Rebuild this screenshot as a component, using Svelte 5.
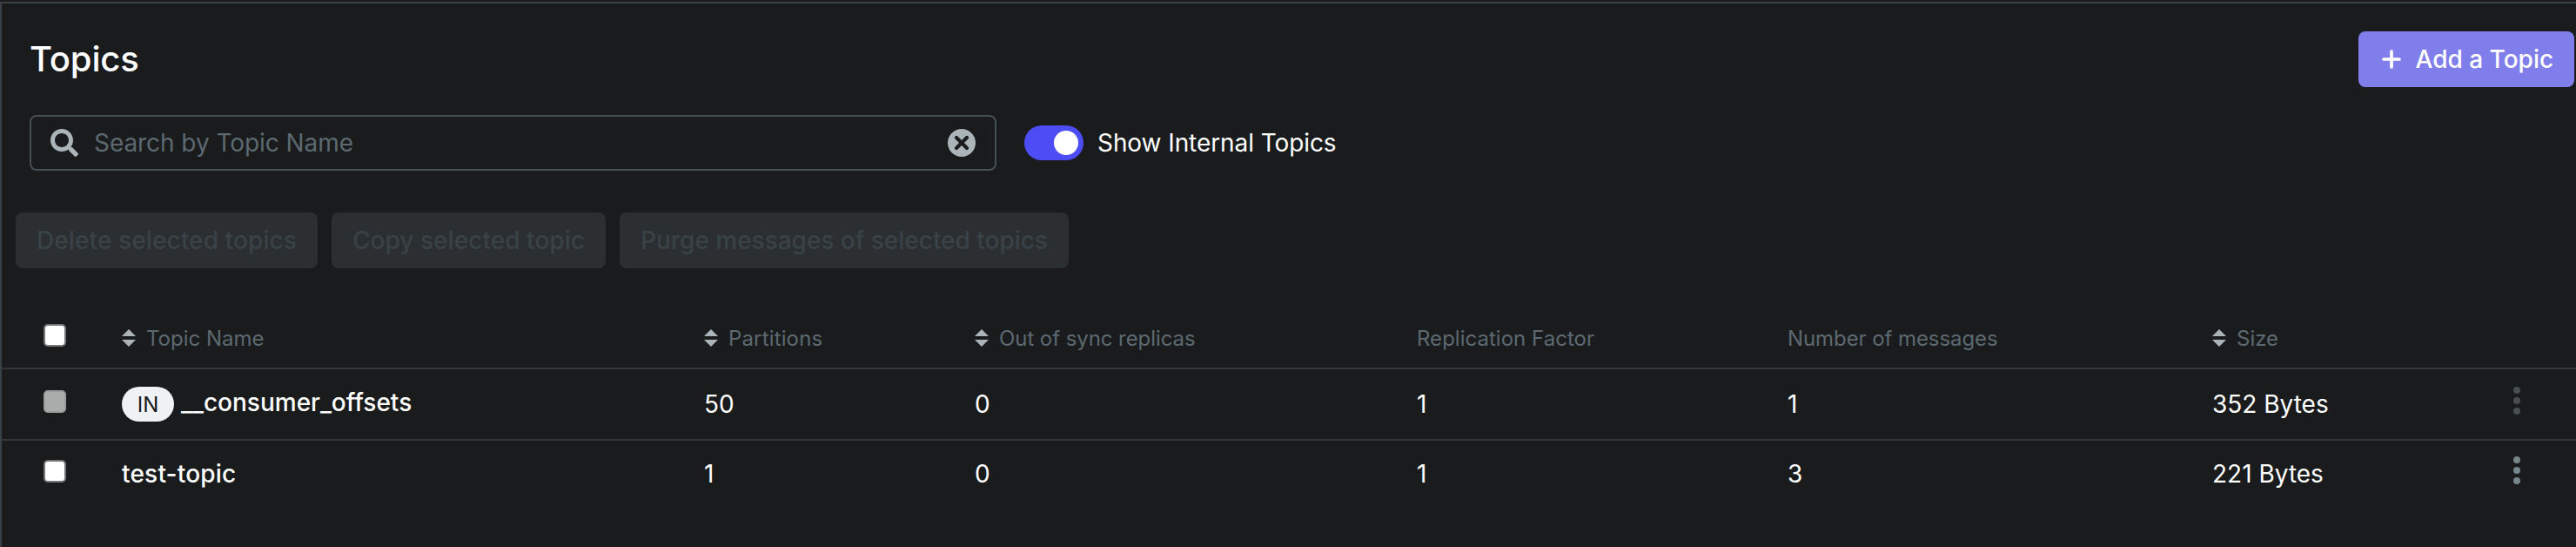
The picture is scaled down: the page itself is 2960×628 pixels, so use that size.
<script>
  const columns = [
    { label: 'Topic Name', sortable: true, spacing: 0 },
    { label: 'Partitions', sortable: true, spacing: 0.15 },
    { label: 'Out of sync replicas', sortable: true, spacing: -0.07 },
    { label: 'Replication Factor', sortable: false, spacing: 0.02 },
    { label: 'Number of messages', sortable: false, spacing: -0.08 },
    { label: 'Size', sortable: true, spacing: 0 }
  ];
  const topics = [
    { name: '__consumer_offsets', internal: true, values: ['50', '0', '1', '1', '352 Bytes'] },
    { name: 'test-topic', internal: false, values: ['1', '0', '1', '3', '221 Bytes'] }
  ];
  const actions = [
    { label: 'Delete selected topics', width: 347, spacing: 0.1 },
    { label: 'Copy selected topic', width: 315, spacing: 0.05 },
    { label: 'Purge messages of selected topics', width: 516, spacing: -0.02 }
  ];
</script>

<main class="page">
  <header class="heading">
    <h1>Topics</h1>
    <button class="add">
      <svg width="22" height="22" viewBox="0 0 22 22"><path d="M11 2v18M2 11h18" stroke="#fff" stroke-width="3.700" stroke-linecap="round" /></svg>
      <span>Add a Topic</span>
    </button>
  </header>

  <section class="filters">
    <div class="search">
      <svg width="32" height="32" viewBox="0 0 512 512"><path fill="#abb4b8" d="M505 442.700L405.300 343c-4.500-4.500-10.600-7-17-7H372c27.600-35.300 44-79.700 44-128C416 93.100 322.900 0 208 0S0 93.100 0 208s93.100 208 208 208c48.300 0 92.700-16.400 128-44v16.300c0 6.400 2.500 12.500 7 17l99.700 99.700c9.400 9.400 24.600 9.400 33.900 0l28.300-28.300c9.400-9.400 9.400-24.600.1-34zM208 336c-70.700 0-128-57.200-128-128 0-70.700 57.200-128 128-128 70.700 0 128 57.200 128 128 0 70.700-57.200 128-128 128z" /></svg>
      <span class="placeholder">Search by Topic Name</span>
      <svg width="32" height="32" viewBox="0 0 32 32"><circle cx="16" cy="16" r="16" fill="#abb4b8" /><path d="M10 10l12 12M22 10L10 22" stroke="#1a1b1d" stroke-width="4.200" stroke-linecap="round" /></svg>
    </div>
    <div class="toggle"><i></i></div>
    <span class="toggle-label">Show Internal Topics</span>
  </section>

  <section class="actions">
    {#each actions as action}
      <button disabled style="width: {action.width}px; letter-spacing: {action.spacing}px">{action.label}</button>
    {/each}
  </section>

  <section class="table">
    <div class="row head">
      <div><span class="box"></span></div>
      {#each columns as column}
        <div class="label">
          {#if column.sortable}<svg width="16" height="20" viewBox="0 0 16 20"><path fill="#abb4b8" d="M8 0l8 8H0zM0 12h16l-8 8z" /></svg>{/if}
          <span style="letter-spacing: {column.spacing}px">{column.label}</span>
        </div>
      {/each}
      <div></div>
    </div>
    {#each topics as topic}
      <div class="row" class:internal={topic.internal}>
        <div><span class="box"></span></div>
        <div class="name">
          {#if topic.internal}<span class="badge">IN</span>{/if}
          <span class="title">{topic.name}</span>
        </div>
        {#each topic.values as value}<div>{value}</div>{/each}
        <div class="menu"><svg width="8" height="32" viewBox="0 0 8 32"><circle cx="4" cy="4" r="4" /><circle cx="4" cy="16" r="4" /><circle cx="4" cy="28" r="4" /></svg></div>
      </div>
    {/each}
  </section>
</main>

<style>
  :global(body) { background: #1a1b1d; }
  .page { box-sizing: border-box; height: 626px; margin-top: 2px; border-top: 2px solid #394146; border-left: 2px solid #394146; font-family: Inter, sans-serif; font-size: 28px; color: #fff; background: #1a1b1d; }
  svg { display: block; flex: none; }
  button { border: 0; font: inherit; font-weight: 500; white-space: nowrap; }
  .heading { display: flex; align-items: center; justify-content: space-between; height: 64px; padding: 32px 2px 0 32px; }
  h1 { margin: 0; font-size: 40px; font-weight: 500; line-height: 64px; letter-spacing: -0.15px; }
  .add { display: flex; align-items: center; gap: 16.5px; box-sizing: border-box; width: 248px; height: 64px; padding: 0 0 0 27px; border-radius: 8px; background: #7f7eea; color: #fff; }
  .filters { display: flex; align-items: center; height: 64px; padding: 32px 0 0 32px; }
  .search { display: flex; align-items: center; box-sizing: border-box; width: 1111px; height: 64px; padding: 0 22px; border: 2px solid #454f54; border-radius: 8px; }
  .placeholder { flex: 1; margin-left: 18px; color: #5c6970; letter-spacing: -0.06px; }
  .toggle { display: flex; align-items: center; justify-content: flex-end; box-sizing: border-box; width: 68px; height: 40px; margin-left: 32px; padding-right: 6px; border-radius: 20px; background: #4d4df6; }
  .toggle i { width: 28px; height: 28px; border-radius: 50%; background: #fff; }
  .toggle-label { margin-left: 16px; letter-spacing: -0.08px; }
  .actions { display: flex; gap: 16px; padding: 48px 0 0 16px; }
  .actions button { flex: none; height: 64px; padding: 0; border-radius: 8px; background: #2b2f32; color: #394246; }
  .table { margin-top: 46px; }
  .row { display: grid; grid-template-columns: 138px 669px 311px 508px 426px 488px 346px 1fr; align-items: center; height: 76px; }
  .row > div:first-child { padding: 0 0 6px 48px; }
  .head { height: 68px; border-bottom: 2px solid #303639; }
  .internal { height: 80px; border-bottom: 2px solid #303639; }
  .box { display: block; box-sizing: border-box; width: 26px; height: 26px; border: 2px solid #767676; border-radius: 5px; background: #fff; }
  .internal .box { border-color: #9a9b9b; background: #aaacac; }
  .label { display: flex; align-items: center; gap: 12px; font-size: 24px; color: #5c6970; }
  .name { display: flex; align-items: center; gap: 8px; font-weight: 500; }
  .title { letter-spacing: 0.2px; }
  .internal .title { padding-bottom: 4px; letter-spacing: 0; }
  .badge { display: flex; align-items: center; justify-content: center; width: 60px; height: 40px; border-radius: 20px; background: #f0f1f4; color: #171a1c; font-size: 24px; font-weight: 400; }
  .menu { padding-bottom: 8px; fill: #77858c; }
  .internal .menu { fill: #484f53; }
</style>
